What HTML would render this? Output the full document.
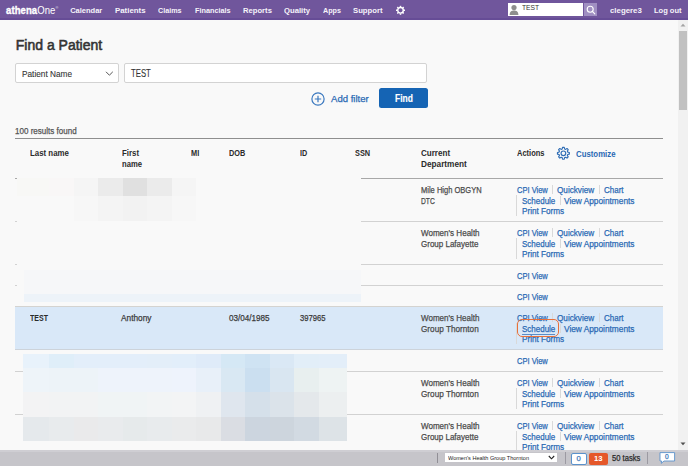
<!DOCTYPE html>
<html><head><meta charset="utf-8"><style>
html,body{margin:0;padding:0;}
body{width:688px;height:466px;overflow:hidden;position:relative;background:#f9f9f9;font-family:"Liberation Sans", sans-serif;}
.t{position:absolute;white-space:nowrap;transform-origin:0 50%;}
.n{-webkit-text-stroke:0.25px currentColor;}
.b{position:absolute;}
</style></head><body>
<div class="b" style="left:0px;top:0px;width:688px;height:18px;background:#70569c"></div>
<div class="b" style="left:0px;top:18px;width:688px;height:1.6px;background:#664c96"></div>
<div class="t" id="t0" style="left:6px;top:4.27px;font-size:10.6px;line-height:12.72px;font-weight:700;color:#fff;letter-spacing:0.1px;transform:scaleX(0.8987);"><span style="-webkit-text-stroke:0.35px #fff">athena</span><span style="font-weight:400">One</span></div>
<div class="t n" id="t1" style="left:55.4px;top:5.80px;font-size:3.8px;line-height:4.56px;font-weight:400;color:#e8e2f0;letter-spacing:0px;-webkit-text-stroke:0;">&reg;</div>
<div class="t" id="t2" style="left:70.2px;top:6.40px;font-size:7.5px;line-height:9.0px;font-weight:700;color:#f6f3fa;letter-spacing:0px;">Calendar</div>
<div class="t" id="t3" style="left:114.9px;top:6.40px;font-size:7.5px;line-height:9.0px;font-weight:700;color:#f6f3fa;letter-spacing:0px;transform:scaleX(1.0484);">Patients</div>
<div class="t" id="t4" style="left:158.1px;top:6.40px;font-size:7.5px;line-height:9.0px;font-weight:700;color:#f6f3fa;letter-spacing:0px;transform:scaleX(0.9590);">Claims</div>
<div class="t" id="t5" style="left:194.5px;top:6.40px;font-size:7.5px;line-height:9.0px;font-weight:700;color:#f6f3fa;letter-spacing:0px;transform:scaleX(0.9704);">Financials</div>
<div class="t" id="t6" style="left:242.9px;top:6.40px;font-size:7.5px;line-height:9.0px;font-weight:700;color:#f6f3fa;letter-spacing:0px;transform:scaleX(1.0196);">Reports</div>
<div class="t" id="t7" style="left:284px;top:6.40px;font-size:7.5px;line-height:9.0px;font-weight:700;color:#f6f3fa;letter-spacing:0px;transform:scaleX(1.0221);">Quality</div>
<div class="t" id="t8" style="left:323.1px;top:6.40px;font-size:7.5px;line-height:9.0px;font-weight:700;color:#f6f3fa;letter-spacing:0px;transform:scaleX(0.9547);">Apps</div>
<div class="t" id="t9" style="left:353.3px;top:6.40px;font-size:7.5px;line-height:9.0px;font-weight:700;color:#f6f3fa;letter-spacing:0px;transform:scaleX(1.0261);">Support</div>
<svg class="b" style="left:394px;top:3.5px" width="13" height="13" viewBox="0 0 13 13"><circle cx="6.5" cy="6.3" r="2.8" fill="none" stroke="#fff" stroke-width="1.4"/><g stroke="#fff" stroke-width="1.5"><line x1="9.70" y1="6.30" x2="11.00" y2="6.30"/><line x1="8.76" y1="8.56" x2="9.68" y2="9.48"/><line x1="6.50" y1="9.50" x2="6.50" y2="10.80"/><line x1="4.24" y1="8.56" x2="3.32" y2="9.48"/><line x1="3.30" y1="6.30" x2="2.00" y2="6.30"/><line x1="4.24" y1="4.04" x2="3.32" y2="3.12"/><line x1="6.50" y1="3.10" x2="6.50" y2="1.80"/><line x1="8.76" y1="4.04" x2="9.68" y2="3.12"/></g></svg>
<div class="b" style="left:508px;top:3px;width:75px;height:13px;background:#fff"></div>
<svg class="b" style="left:509px;top:4px" width="10" height="11" viewBox="0 0 10 11">
<circle cx="5" cy="3.6" r="2.6" fill="#8e8e8e"/>
<path d="M0.6 11 C0.8 7.6 2.4 6.6 5 6.6 C7.6 6.6 9.2 7.6 9.4 11 Z" fill="#8e8e8e"/>
</svg>
<div class="t n" id="t10" style="left:521.8px;top:4.40px;font-size:7.4px;line-height:8.88px;font-weight:400;color:#333;letter-spacing:0px;-webkit-text-stroke:0;transform:scaleX(0.9105);">TEST</div>
<div class="b" style="left:584px;top:3px;width:13px;height:13px;background:#a08fc2"></div>
<svg class="b" style="left:586px;top:5px" width="10" height="10" viewBox="0 0 10 10">
<circle cx="4.2" cy="4.2" r="3" fill="none" stroke="#fff" stroke-width="1.1"/>
<line x1="6.4" y1="6.4" x2="8.8" y2="8.8" stroke="#fff" stroke-width="1.2" stroke-linecap="round"/>
</svg>
<div class="t" id="t11" style="left:609.6px;top:6.40px;font-size:7.5px;line-height:9.0px;font-weight:700;color:#f6f3fa;letter-spacing:0px;transform:scaleX(1.0442);">clegere3</div>
<div class="t" id="t12" style="left:654px;top:6.40px;font-size:7.5px;line-height:9.0px;font-weight:700;color:#f6f3fa;letter-spacing:0px;">Log out</div>
<div class="b" style="left:678px;top:20px;width:10px;height:430px;background:#f1f1f1"></div>
<svg class="b" style="left:678px;top:20px" width="10" height="10" viewBox="0 0 10 10"><path d="M2.5 6.5 L5 3.8 L7.5 6.5 Z" fill="#a3a3a3"/></svg>
<div class="b" style="left:679px;top:30.5px;width:8px;height:79px;background:#c1c1c1"></div>
<svg class="b" style="left:678px;top:439px" width="10" height="10" viewBox="0 0 10 10"><path d="M2.5 3.5 L5 6.2 L7.5 3.5 Z" fill="#505050"/></svg>
<div class="t n" id="t13" style="left:15.8px;top:37.25px;font-size:14px;line-height:16.8px;font-weight:400;color:#333;letter-spacing:0px;-webkit-text-stroke:0.55px #333;">Find a Patient</div>
<div class="b" style="left:15px;top:63px;width:103.5px;height:19.5px;background:#fff;border:1px solid #d3d3d3;border-radius:2px;box-sizing:border-box"></div>
<div class="t n" id="t14" style="left:22px;top:68.50px;font-size:9.3px;line-height:11.16px;font-weight:400;color:#333;letter-spacing:0px;-webkit-text-stroke:0.1px #333;transform:scaleX(0.8877);">Patient Name</div>
<svg class="b" style="left:105px;top:70px" width="9" height="7" viewBox="0 0 9 7"><path d="M1 1.8 L4.4 5.2 L7.8 1.8" fill="none" stroke="#555" stroke-width="1"/></svg>
<div class="b" style="left:124.4px;top:63px;width:302.2px;height:19.5px;background:#fff;border:1px solid #d3d3d3;border-radius:2px;box-sizing:border-box"></div>
<div class="t n" id="t15" style="left:131.2px;top:68.15px;font-size:10.2px;line-height:12.24px;font-weight:400;color:#333;letter-spacing:0px;-webkit-text-stroke:0.1px #333;transform:scaleX(0.7602);">TEST</div>
<svg class="b" style="left:311px;top:91.5px" width="14" height="14" viewBox="0 0 14 14"><circle cx="7" cy="7" r="6.1" fill="none" stroke="#3a78bf" stroke-width="1.2"/><path d="M7 3.8 V10.2 M3.8 7 H10.2" stroke="#3a78bf" stroke-width="1.2"/></svg>
<div class="t n" id="t16" style="left:331.1px;top:93.22px;font-size:9.8px;line-height:11.76px;font-weight:400;color:#2a69b4;letter-spacing:0px;transform:scaleX(0.9775);">Add filter</div>
<div class="b" style="left:379.2px;top:88.2px;width:49px;height:19.6px;background:#1564b4;border-radius:2.5px"></div>
<div class="t" id="t17" style="left:395px;top:93.03px;font-size:10px;line-height:12.0px;font-weight:700;color:#fff;letter-spacing:0px;-webkit-text-stroke:0.15px #fff;transform:scaleX(0.8432);">Find</div>
<div class="t n" id="t18" style="left:15.1px;top:126.15px;font-size:8.5px;line-height:10.2px;font-weight:400;color:#555;letter-spacing:0px;transform:scaleX(0.9445);">100 results found</div>
<div class="b" style="left:15px;top:138px;width:648px;height:1px;background:#8f8f8f"></div>
<div class="t" id="t19" style="left:30px;top:148.26px;font-size:8.6px;line-height:10.32px;font-weight:700;color:#2b2b2b;letter-spacing:0px;transform:scaleX(0.9150);">Last name</div>
<div class="t" id="t20" style="left:121.5px;top:148.26px;font-size:8.6px;line-height:10.32px;font-weight:700;color:#2b2b2b;letter-spacing:0px;transform:scaleX(0.9128);">First</div>
<div class="t" id="t21" style="left:191px;top:148.26px;font-size:8.6px;line-height:10.32px;font-weight:700;color:#2b2b2b;letter-spacing:0px;transform:scaleX(0.8589);">MI</div>
<div class="t" id="t22" style="left:229.4px;top:148.26px;font-size:8.6px;line-height:10.32px;font-weight:700;color:#2b2b2b;letter-spacing:0px;transform:scaleX(0.8530);">DOB</div>
<div class="t" id="t23" style="left:299.8px;top:148.26px;font-size:8.6px;line-height:10.32px;font-weight:700;color:#2b2b2b;letter-spacing:0px;transform:scaleX(0.8378);">ID</div>
<div class="t" id="t24" style="left:355.3px;top:148.26px;font-size:8.6px;line-height:10.32px;font-weight:700;color:#2b2b2b;letter-spacing:0px;transform:scaleX(0.8545);">SSN</div>
<div class="t" id="t25" style="left:420.6px;top:148.26px;font-size:8.6px;line-height:10.32px;font-weight:700;color:#2b2b2b;letter-spacing:0px;transform:scaleX(0.9373);">Current</div>
<div class="t" id="t26" style="left:516.8px;top:148.26px;font-size:8.6px;line-height:10.32px;font-weight:700;color:#2b2b2b;letter-spacing:0px;transform:scaleX(0.8726);">Actions</div>
<div class="t" id="t27" style="left:121.5px;top:159.11px;font-size:8.6px;line-height:10.32px;font-weight:700;color:#2b2b2b;letter-spacing:0px;transform:scaleX(0.8907);">name</div>
<div class="t" id="t28" style="left:420.6px;top:159.11px;font-size:8.6px;line-height:10.32px;font-weight:700;color:#2b2b2b;letter-spacing:0px;transform:scaleX(0.9588);">Department</div>
<svg class="b" style="left:556px;top:146px" width="15" height="15" viewBox="0 0 15 15"><path fill="none" stroke="#2f6db5" stroke-width="1.15" stroke-linejoin="round" d="M6.18 2.97 L6.55 1.36 L8.25 1.36 L8.62 2.97 L9.60 3.37 L11.00 2.50 L12.20 3.70 L11.33 5.10 L11.73 6.08 L13.34 6.45 L13.34 8.15 L11.73 8.52 L11.33 9.50 L12.20 10.90 L11.00 12.10 L9.60 11.23 L8.62 11.63 L8.25 13.24 L6.55 13.24 L6.18 11.63 L5.20 11.23 L3.80 12.10 L2.60 10.90 L3.47 9.50 L3.07 8.52 L1.46 8.15 L1.46 6.45 L3.07 6.08 L3.47 5.10 L2.60 3.70 L3.80 2.50 L5.20 3.37 Z"/><circle cx="7.4" cy="7.3" r="2.35" fill="none" stroke="#2f6db5" stroke-width="1.15"/></svg>
<div class="t" id="t29" style="left:576.1px;top:148.56px;font-size:8.6px;line-height:10.32px;font-weight:700;color:#2a69b4;letter-spacing:0px;transform:scaleX(0.9090);">Customize</div>
<div class="b" style="left:15px;top:178px;width:648px;height:1px;background:#a8a8a8"></div>
<div class="b" style="left:15px;top:221px;width:648px;height:1px;background:#d2d2d2"></div>
<div class="t n" id="t30" style="left:420.6px;top:184.69px;font-size:9.2px;line-height:11.04px;font-weight:400;color:#4a4a4a;letter-spacing:0px;transform:scaleX(0.8186);">Mile High OBGYN</div>
<div class="t n" id="t31" style="left:420.6px;top:195.54px;font-size:9.2px;line-height:11.04px;font-weight:400;color:#4a4a4a;letter-spacing:0px;transform:scaleX(0.7305);">DTC</div>
<div class="t n" id="t32" style="left:517px;top:184.69px;font-size:9.2px;line-height:11.04px;font-weight:400;color:#2a69b4;letter-spacing:0px;transform:scaleX(0.8186);">CPI View</div>
<div class="b" style="left:552.3px;top:184.6px;width:1px;height:9px;background:#d9d9d9"></div>
<div class="t n" id="t33" style="left:556.9px;top:184.69px;font-size:9.2px;line-height:11.04px;font-weight:400;color:#2a69b4;letter-spacing:0px;transform:scaleX(0.8884);">Quickview</div>
<div class="b" style="left:598.8px;top:184.6px;width:1px;height:9px;background:#d9d9d9"></div>
<div class="t n" id="t34" style="left:603.9px;top:184.69px;font-size:9.2px;line-height:11.04px;font-weight:400;color:#2a69b4;letter-spacing:0px;transform:scaleX(0.8679);">Chart</div>
<div class="b" style="left:516.4px;top:195.20000000000002px;width:1px;height:20.5px;background:#d9d9d9"></div>
<div class="t n" id="t35" style="left:521.7px;top:195.54px;font-size:9.2px;line-height:11.04px;font-weight:400;color:#2a69b4;letter-spacing:0px;transform:scaleX(0.8692);">Schedule</div>
<div class="b" style="left:559.5px;top:195.5px;width:1px;height:9px;background:#d9d9d9"></div>
<div class="t n" id="t36" style="left:564.2px;top:195.54px;font-size:9.2px;line-height:11.04px;font-weight:400;color:#2a69b4;letter-spacing:0px;transform:scaleX(0.9040);">View Appointments</div>
<div class="t n" id="t37" style="left:521.7px;top:206.39px;font-size:9.2px;line-height:11.04px;font-weight:400;color:#2a69b4;letter-spacing:0px;transform:scaleX(0.8887);">Print Forms</div>
<div class="b" style="left:15px;top:264px;width:648px;height:1px;background:#d2d2d2"></div>
<div class="t n" id="t38" style="left:420.6px;top:227.69px;font-size:9.2px;line-height:11.04px;font-weight:400;color:#4a4a4a;letter-spacing:0px;transform:scaleX(0.8752);">Women's Health</div>
<div class="t n" id="t39" style="left:420.6px;top:238.54px;font-size:9.2px;line-height:11.04px;font-weight:400;color:#4a4a4a;letter-spacing:0px;transform:scaleX(0.8711);">Group Lafayette</div>
<div class="t n" id="t40" style="left:517px;top:227.69px;font-size:9.2px;line-height:11.04px;font-weight:400;color:#2a69b4;letter-spacing:0px;transform:scaleX(0.8186);">CPI View</div>
<div class="b" style="left:552.3px;top:227.6px;width:1px;height:9px;background:#d9d9d9"></div>
<div class="t n" id="t41" style="left:556.9px;top:227.69px;font-size:9.2px;line-height:11.04px;font-weight:400;color:#2a69b4;letter-spacing:0px;transform:scaleX(0.8884);">Quickview</div>
<div class="b" style="left:598.8px;top:227.6px;width:1px;height:9px;background:#d9d9d9"></div>
<div class="t n" id="t42" style="left:603.9px;top:227.69px;font-size:9.2px;line-height:11.04px;font-weight:400;color:#2a69b4;letter-spacing:0px;transform:scaleX(0.8679);">Chart</div>
<div class="b" style="left:516.4px;top:238.20000000000002px;width:1px;height:20.5px;background:#d9d9d9"></div>
<div class="t n" id="t43" style="left:521.7px;top:238.54px;font-size:9.2px;line-height:11.04px;font-weight:400;color:#2a69b4;letter-spacing:0px;transform:scaleX(0.8692);">Schedule</div>
<div class="b" style="left:559.5px;top:238.5px;width:1px;height:9px;background:#d9d9d9"></div>
<div class="t n" id="t44" style="left:564.2px;top:238.54px;font-size:9.2px;line-height:11.04px;font-weight:400;color:#2a69b4;letter-spacing:0px;transform:scaleX(0.9040);">View Appointments</div>
<div class="t n" id="t45" style="left:521.7px;top:249.39px;font-size:9.2px;line-height:11.04px;font-weight:400;color:#2a69b4;letter-spacing:0px;transform:scaleX(0.8887);">Print Forms</div>
<div class="b" style="left:15px;top:285px;width:648px;height:1px;background:#d2d2d2"></div>
<div class="t n" id="t46" style="left:517px;top:270.69px;font-size:9.2px;line-height:11.04px;font-weight:400;color:#2a69b4;letter-spacing:0px;transform:scaleX(0.8186);">CPI View</div>
<div class="b" style="left:15px;top:306px;width:648px;height:1px;background:#d2d2d2"></div>
<div class="t n" id="t47" style="left:517px;top:291.69px;font-size:9.2px;line-height:11.04px;font-weight:400;color:#2a69b4;letter-spacing:0px;transform:scaleX(0.8186);">CPI View</div>
<div class="b" style="left:15px;top:306px;width:648px;height:43.5px;background:#d9e8f8"></div>
<div class="b" style="left:15px;top:306px;width:648px;height:1px;background:#d4d3d0"></div>
<div class="b" style="left:15px;top:348.5px;width:648px;height:1.5px;background:#cdd3da"></div>
<div class="t n" id="t48" style="left:420.6px;top:312.69px;font-size:9.2px;line-height:11.04px;font-weight:400;color:#4a4a4a;letter-spacing:0px;transform:scaleX(0.8737);">Women's Health</div>
<div class="t n" id="t49" style="left:420.6px;top:323.54px;font-size:9.2px;line-height:11.04px;font-weight:400;color:#4a4a4a;letter-spacing:0px;transform:scaleX(0.8918);">Group Thornton</div>
<div class="t n" id="t50" style="left:517px;top:312.69px;font-size:9.2px;line-height:11.04px;font-weight:400;color:#2a69b4;letter-spacing:0px;transform:scaleX(0.8186);">CPI View</div>
<div class="b" style="left:552.3px;top:312.59999999999997px;width:1px;height:9px;background:#d9d9d9"></div>
<div class="t n" id="t51" style="left:556.9px;top:312.69px;font-size:9.2px;line-height:11.04px;font-weight:400;color:#2a69b4;letter-spacing:0px;transform:scaleX(0.8884);">Quickview</div>
<div class="b" style="left:598.8px;top:312.59999999999997px;width:1px;height:9px;background:#d9d9d9"></div>
<div class="t n" id="t52" style="left:603.9px;top:312.69px;font-size:9.2px;line-height:11.04px;font-weight:400;color:#2a69b4;letter-spacing:0px;transform:scaleX(0.8679);">Chart</div>
<div class="b" style="left:516.4px;top:323.2px;width:1px;height:20.5px;background:#d9d9d9"></div>
<div class="t n" id="t53" style="left:521.7px;top:323.54px;font-size:9.2px;line-height:11.04px;font-weight:400;color:#2a69b4;letter-spacing:0px;transform:scaleX(0.8692);">Schedule</div>
<div class="b" style="left:559.5px;top:323.5px;width:1px;height:9px;background:#d9d9d9"></div>
<div class="t n" id="t54" style="left:564.2px;top:323.54px;font-size:9.2px;line-height:11.04px;font-weight:400;color:#2a69b4;letter-spacing:0px;transform:scaleX(0.9040);">View Appointments</div>
<div class="t n" id="t55" style="left:521.7px;top:334.39px;font-size:9.2px;line-height:11.04px;font-weight:400;color:#2a69b4;letter-spacing:0px;transform:scaleX(0.8887);">Print Forms</div>
<div class="b" style="left:15px;top:371.0px;width:648px;height:1px;background:#d2d2d2"></div>
<div class="t n" id="t56" style="left:517px;top:356.19px;font-size:9.2px;line-height:11.04px;font-weight:400;color:#2a69b4;letter-spacing:0px;transform:scaleX(0.8186);">CPI View</div>
<div class="b" style="left:15px;top:414px;width:648px;height:1px;background:#d2d2d2"></div>
<div class="t n" id="t57" style="left:420.6px;top:377.69px;font-size:9.2px;line-height:11.04px;font-weight:400;color:#4a4a4a;letter-spacing:0px;transform:scaleX(0.8752);">Women's Health</div>
<div class="t n" id="t58" style="left:420.6px;top:388.54px;font-size:9.2px;line-height:11.04px;font-weight:400;color:#4a4a4a;letter-spacing:0px;transform:scaleX(0.8918);">Group Thornton</div>
<div class="t n" id="t59" style="left:517px;top:377.69px;font-size:9.2px;line-height:11.04px;font-weight:400;color:#2a69b4;letter-spacing:0px;transform:scaleX(0.8186);">CPI View</div>
<div class="b" style="left:552.3px;top:377.59999999999997px;width:1px;height:9px;background:#d9d9d9"></div>
<div class="t n" id="t60" style="left:556.9px;top:377.69px;font-size:9.2px;line-height:11.04px;font-weight:400;color:#2a69b4;letter-spacing:0px;transform:scaleX(0.8884);">Quickview</div>
<div class="b" style="left:598.8px;top:377.59999999999997px;width:1px;height:9px;background:#d9d9d9"></div>
<div class="t n" id="t61" style="left:603.9px;top:377.69px;font-size:9.2px;line-height:11.04px;font-weight:400;color:#2a69b4;letter-spacing:0px;transform:scaleX(0.8679);">Chart</div>
<div class="b" style="left:516.4px;top:388.2px;width:1px;height:20.5px;background:#d9d9d9"></div>
<div class="t n" id="t62" style="left:521.7px;top:388.54px;font-size:9.2px;line-height:11.04px;font-weight:400;color:#2a69b4;letter-spacing:0px;transform:scaleX(0.8692);">Schedule</div>
<div class="b" style="left:559.5px;top:388.5px;width:1px;height:9px;background:#d9d9d9"></div>
<div class="t n" id="t63" style="left:564.2px;top:388.54px;font-size:9.2px;line-height:11.04px;font-weight:400;color:#2a69b4;letter-spacing:0px;transform:scaleX(0.9040);">View Appointments</div>
<div class="t n" id="t64" style="left:521.7px;top:399.39px;font-size:9.2px;line-height:11.04px;font-weight:400;color:#2a69b4;letter-spacing:0px;transform:scaleX(0.8887);">Print Forms</div>
<div class="b" style="left:15px;top:457px;width:648px;height:1px;background:#d2d2d2"></div>
<div class="t n" id="t65" style="left:420.6px;top:420.69px;font-size:9.2px;line-height:11.04px;font-weight:400;color:#4a4a4a;letter-spacing:0px;transform:scaleX(0.8752);">Women's Health</div>
<div class="t n" id="t66" style="left:420.6px;top:431.54px;font-size:9.2px;line-height:11.04px;font-weight:400;color:#4a4a4a;letter-spacing:0px;transform:scaleX(0.8711);">Group Lafayette</div>
<div class="t n" id="t67" style="left:517px;top:420.69px;font-size:9.2px;line-height:11.04px;font-weight:400;color:#2a69b4;letter-spacing:0px;transform:scaleX(0.8186);">CPI View</div>
<div class="b" style="left:552.3px;top:420.59999999999997px;width:1px;height:9px;background:#d9d9d9"></div>
<div class="t n" id="t68" style="left:556.9px;top:420.69px;font-size:9.2px;line-height:11.04px;font-weight:400;color:#2a69b4;letter-spacing:0px;transform:scaleX(0.8884);">Quickview</div>
<div class="b" style="left:598.8px;top:420.59999999999997px;width:1px;height:9px;background:#d9d9d9"></div>
<div class="t n" id="t69" style="left:603.9px;top:420.69px;font-size:9.2px;line-height:11.04px;font-weight:400;color:#2a69b4;letter-spacing:0px;transform:scaleX(0.8679);">Chart</div>
<div class="b" style="left:516.4px;top:431.2px;width:1px;height:20.5px;background:#d9d9d9"></div>
<div class="t n" id="t70" style="left:521.7px;top:431.54px;font-size:9.2px;line-height:11.04px;font-weight:400;color:#2a69b4;letter-spacing:0px;transform:scaleX(0.8692);">Schedule</div>
<div class="b" style="left:559.5px;top:431.5px;width:1px;height:9px;background:#d9d9d9"></div>
<div class="t n" id="t71" style="left:564.2px;top:431.54px;font-size:9.2px;line-height:11.04px;font-weight:400;color:#2a69b4;letter-spacing:0px;transform:scaleX(0.9040);">View Appointments</div>
<div class="t n" id="t72" style="left:521.7px;top:442.39px;font-size:9.2px;line-height:11.04px;font-weight:400;color:#2a69b4;letter-spacing:0px;transform:scaleX(0.8887);">Print Forms</div>
<div class="t" id="t73" style="left:30px;top:313.16px;font-size:8.6px;line-height:10.32px;font-weight:700;color:#2b2b2b;letter-spacing:0px;transform:scaleX(0.8193);">TEST</div>
<div class="t n" id="t74" style="left:121.2px;top:312.59px;font-size:9.2px;line-height:11.04px;font-weight:400;color:#3a3a3a;letter-spacing:0px;transform:scaleX(0.9016);">Anthony</div>
<div class="t n" id="t75" style="left:229.3px;top:312.59px;font-size:9.2px;line-height:11.04px;font-weight:400;color:#3a3a3a;letter-spacing:0px;transform:scaleX(0.8829);">03/04/1985</div>
<div class="t n" id="t76" style="left:299.6px;top:312.59px;font-size:9.2px;line-height:11.04px;font-weight:400;color:#3a3a3a;letter-spacing:0px;transform:scaleX(0.8346);">397965</div>
<div class="b" style="left:516.8px;top:318.8px;width:42.2px;height:17.8px;border:1.8px solid #e8703a;border-radius:5px;box-sizing:border-box"></div>
<div class="b" style="left:522px;top:333.6px;width:33px;height:1px;background:#5b8cc6"></div>
<div class="b" style="left:0px;top:450px;width:688px;height:16px;background:#c6c5ca"></div>
<div class="b" style="left:437px;top:452.7px;width:1px;height:10.7px;background:#918f96"></div>
<div class="b" style="left:0px;top:450px;width:688px;height:1.5px;background:#cfced3"></div>
<div class="b" style="left:444.7px;top:453.2px;width:112.3px;height:9px;background:#fff"></div>
<div class="t n" id="t77" style="left:447.5px;top:454.91px;font-size:5.8px;line-height:6.96px;font-weight:400;color:#222;letter-spacing:0px;-webkit-text-stroke:0;transform:scaleX(0.9566);">Women's Health Group Thornton</div>
<svg class="b" style="left:548px;top:455px" width="7" height="5" viewBox="0 0 7 5"><path d="M0.8 1 L3.5 3.8 L6.2 1" fill="none" stroke="#222" stroke-width="1.1"/></svg>
<div class="b" style="left:564.5px;top:452px;width:1px;height:12px;background:#9c9aa2"></div>
<div class="b" style="left:571.2px;top:452.9px;width:15.5px;height:11.7px;background:#fff;border:1px solid #5b92cc;border-radius:2px;box-sizing:border-box"></div>
<div class="t n" id="t78" style="left:576.6px;top:454.41px;font-size:7.6px;line-height:9.12px;font-weight:400;color:#3c78bb;letter-spacing:0px;">0</div>
<div class="b" style="left:588.6px;top:452.9px;width:19.5px;height:11.7px;background:#e5582a;border-radius:2px"></div>
<div class="t" id="t79" style="left:594px;top:454.22px;font-size:7.8px;line-height:9.36px;font-weight:700;color:#fff;letter-spacing:0px;transform:scaleX(0.9899);">13</div>
<div class="t n" id="t80" style="left:612.3px;top:453.94px;font-size:8.2px;line-height:9.84px;font-weight:400;color:#2a2a2a;letter-spacing:0px;transform:scaleX(0.9279);">50 tasks</div>
<div class="b" style="left:646.8px;top:452px;width:1px;height:12px;background:#9c9aa2"></div>
<svg class="b" style="left:659px;top:452px" width="17" height="12" viewBox="0 0 17 12"><path d="M1 0.6 H15.6 V9 H5 L2.3 11.4 L2.6 9 H1 Z" fill="#fff" stroke="#5b92cc" stroke-width="0.9"/></svg>
<div class="t n" id="t81" style="left:665px;top:453.35px;font-size:6.6px;line-height:7.92px;font-weight:400;color:#3c78bb;letter-spacing:0px;">0</div>
<div class="b" style="left:17px;top:178px;width:344px;height:124px;background:#f9f9f9"></div>
<div class="b" style="left:17px;top:178px;width:32px;height:18px;background:#f8f8f6"></div>
<div class="b" style="left:49px;top:178px;width:24.5px;height:18px;background:#f9f7f7"></div>
<div class="b" style="left:73.5px;top:178px;width:24.5px;height:18px;background:#f5f5f5"></div>
<div class="b" style="left:98px;top:178px;width:24.5px;height:18px;background:#ebebeb"></div>
<div class="b" style="left:122.5px;top:178px;width:24.5px;height:18px;background:#e0e0e0"></div>
<div class="b" style="left:147px;top:178px;width:24.5px;height:18px;background:#ebebeb"></div>
<div class="b" style="left:171.5px;top:178px;width:24.5px;height:18px;background:#f5f5f5"></div>
<div class="b" style="left:17px;top:196px;width:32px;height:24.5px;background:#f9f9f9"></div>
<div class="b" style="left:49px;top:196px;width:24.5px;height:24.5px;background:#f9f9f9"></div>
<div class="b" style="left:73.5px;top:196px;width:24.5px;height:24.5px;background:#f7f7f7"></div>
<div class="b" style="left:98px;top:196px;width:24.5px;height:24.5px;background:#f4f4f4"></div>
<div class="b" style="left:122.5px;top:196px;width:24.5px;height:24.5px;background:#f2f2f2"></div>
<div class="b" style="left:147px;top:196px;width:24.5px;height:24.5px;background:#f4f4f4"></div>
<div class="b" style="left:171.5px;top:196px;width:24.5px;height:24.5px;background:#f7f7f7"></div>
<div class="b" style="left:24px;top:269.5px;width:337px;height:24.5px;background:#f6f7f9"></div>
<div class="b" style="left:24px;top:294px;width:337px;height:8px;background:#edf3f9"></div>
<div class="b" style="left:23px;top:354px;width:26px;height:13.5px;background:#e8f2fb"></div>
<div class="b" style="left:49px;top:354px;width:24.5px;height:13.5px;background:#dfeef9"></div>
<div class="b" style="left:73.5px;top:354px;width:24.5px;height:13.5px;background:#e3eefa"></div>
<div class="b" style="left:98px;top:354px;width:24.5px;height:13.5px;background:#e3eefa"></div>
<div class="b" style="left:122.5px;top:354px;width:24.5px;height:13.5px;background:#e3eefa"></div>
<div class="b" style="left:147px;top:354px;width:24.5px;height:13.5px;background:#e3eef9"></div>
<div class="b" style="left:171.5px;top:354px;width:24.5px;height:13.5px;background:#e2eefa"></div>
<div class="b" style="left:196px;top:354px;width:24.5px;height:13.5px;background:#dfebf9"></div>
<div class="b" style="left:220.5px;top:354px;width:24.5px;height:13.5px;background:#d5e8f5"></div>
<div class="b" style="left:245px;top:354px;width:24.5px;height:13.5px;background:#cfe3f3"></div>
<div class="b" style="left:269.5px;top:354px;width:24.5px;height:13.5px;background:#dae8f5"></div>
<div class="b" style="left:294px;top:354px;width:24.5px;height:13.5px;background:#e2eef8"></div>
<div class="b" style="left:318.5px;top:354px;width:28.5px;height:13.5px;background:#e3eef9"></div>
<div class="b" style="left:23px;top:367.5px;width:26px;height:24.5px;background:#eef4f9"></div>
<div class="b" style="left:49px;top:367.5px;width:24.5px;height:24.5px;background:#edf3f8"></div>
<div class="b" style="left:73.5px;top:367.5px;width:24.5px;height:24.5px;background:#edf3f8"></div>
<div class="b" style="left:98px;top:367.5px;width:24.5px;height:24.5px;background:#eef3fb"></div>
<div class="b" style="left:122.5px;top:367.5px;width:24.5px;height:24.5px;background:#eef3fb"></div>
<div class="b" style="left:147px;top:367.5px;width:24.5px;height:24.5px;background:#eef3fb"></div>
<div class="b" style="left:171.5px;top:367.5px;width:24.5px;height:24.5px;background:#eef3fc"></div>
<div class="b" style="left:196px;top:367.5px;width:24.5px;height:24.5px;background:#e8f0f9"></div>
<div class="b" style="left:220.5px;top:367.5px;width:24.5px;height:24.5px;background:#d9e8f3"></div>
<div class="b" style="left:245px;top:367.5px;width:24.5px;height:24.5px;background:#cbdff0"></div>
<div class="b" style="left:269.5px;top:367.5px;width:24.5px;height:24.5px;background:#d9e6f1"></div>
<div class="b" style="left:294px;top:367.5px;width:24.5px;height:24.5px;background:#e8efef"></div>
<div class="b" style="left:318.5px;top:367.5px;width:28.5px;height:24.5px;background:#eef3f3"></div>
<div class="b" style="left:23px;top:392px;width:26px;height:24.5px;background:#f3f3f4"></div>
<div class="b" style="left:49px;top:392px;width:24.5px;height:24.5px;background:#f2f3f4"></div>
<div class="b" style="left:73.5px;top:392px;width:24.5px;height:24.5px;background:#f2f3f4"></div>
<div class="b" style="left:98px;top:392px;width:24.5px;height:24.5px;background:#f0f4f5"></div>
<div class="b" style="left:122.5px;top:392px;width:24.5px;height:24.5px;background:#f0f4f5"></div>
<div class="b" style="left:147px;top:392px;width:24.5px;height:24.5px;background:#f2f4f5"></div>
<div class="b" style="left:171.5px;top:392px;width:24.5px;height:24.5px;background:#f3f4f5"></div>
<div class="b" style="left:196px;top:392px;width:24.5px;height:24.5px;background:#eff1f3"></div>
<div class="b" style="left:220.5px;top:392px;width:24.5px;height:24.5px;background:#dfe6ee"></div>
<div class="b" style="left:245px;top:392px;width:24.5px;height:24.5px;background:#d5e0ea"></div>
<div class="b" style="left:269.5px;top:392px;width:24.5px;height:24.5px;background:#dbe3ea"></div>
<div class="b" style="left:294px;top:392px;width:24.5px;height:24.5px;background:#e4e8eb"></div>
<div class="b" style="left:318.5px;top:392px;width:28.5px;height:24.5px;background:#eceff0"></div>
<div class="b" style="left:23px;top:416.5px;width:26px;height:24.5px;background:#e5e9ec"></div>
<div class="b" style="left:49px;top:416.5px;width:24.5px;height:24.5px;background:#e8ebed"></div>
<div class="b" style="left:73.5px;top:416.5px;width:24.5px;height:24.5px;background:#eaeaeb"></div>
<div class="b" style="left:98px;top:416.5px;width:24.5px;height:24.5px;background:#e9ebed"></div>
<div class="b" style="left:122.5px;top:416.5px;width:24.5px;height:24.5px;background:#e6eaeb"></div>
<div class="b" style="left:147px;top:416.5px;width:24.5px;height:24.5px;background:#e8ebed"></div>
<div class="b" style="left:171.5px;top:416.5px;width:24.5px;height:24.5px;background:#eaebec"></div>
<div class="b" style="left:196px;top:416.5px;width:24.5px;height:24.5px;background:#e8e9ea"></div>
<div class="b" style="left:220.5px;top:416.5px;width:24.5px;height:24.5px;background:#dadde3"></div>
<div class="b" style="left:245px;top:416.5px;width:24.5px;height:24.5px;background:#ccd5df"></div>
<div class="b" style="left:269.5px;top:416.5px;width:24.5px;height:24.5px;background:#cdd5dd"></div>
<div class="b" style="left:294px;top:416.5px;width:24.5px;height:24.5px;background:#d2dae2"></div>
<div class="b" style="left:318.5px;top:416.5px;width:28.5px;height:24.5px;background:#dde3e7"></div>
</body></html>
